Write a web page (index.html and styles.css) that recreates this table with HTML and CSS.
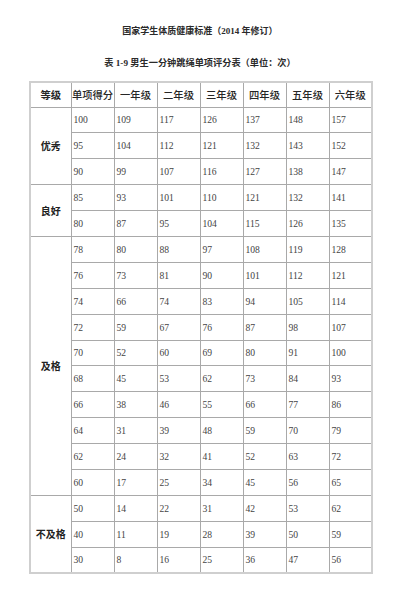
FILE: index.html
```html
<!DOCTYPE html>
<html lang="zh-CN">
<head>
<meta charset="utf-8">
<title>国家学生体质健康标准</title>
<link rel="stylesheet" href="styles.css">
</head>
<body>
<div class="page">
  <p class="title">国家学生体质健康标准（2014 年修订）</p>
  <p class="subtitle">表 1-9 男生一分钟跳绳单项评分表（单位：次）</p>
  <table class="score">
    <colgroup>
      <col class="c-grade"><col class="c"><col class="c"><col class="c"><col class="c"><col class="c"><col class="c"><col class="c">
    </colgroup>
    <thead>
      <tr><th class="g">等级</th><th>单项得分</th><th>一年级</th><th>二年级</th><th>三年级</th><th>四年级</th><th>五年级</th><th>六年级</th></tr>
    </thead>
    <tbody>
      <tr><td class="g" rowspan="3">优秀</td><td>100</td><td>109</td><td>117</td><td>126</td><td>137</td><td>148</td><td>157</td></tr>
      <tr><td>95</td><td>104</td><td>112</td><td>121</td><td>132</td><td>143</td><td>152</td></tr>
      <tr><td>90</td><td>99</td><td>107</td><td>116</td><td>127</td><td>138</td><td>147</td></tr>
      <tr><td class="g" rowspan="2">良好</td><td>85</td><td>93</td><td>101</td><td>110</td><td>121</td><td>132</td><td>141</td></tr>
      <tr><td>80</td><td>87</td><td>95</td><td>104</td><td>115</td><td>126</td><td>135</td></tr>
      <tr><td class="g" rowspan="10">及格</td><td>78</td><td>80</td><td>88</td><td>97</td><td>108</td><td>119</td><td>128</td></tr>
      <tr><td>76</td><td>73</td><td>81</td><td>90</td><td>101</td><td>112</td><td>121</td></tr>
      <tr><td>74</td><td>66</td><td>74</td><td>83</td><td>94</td><td>105</td><td>114</td></tr>
      <tr><td>72</td><td>59</td><td>67</td><td>76</td><td>87</td><td>98</td><td>107</td></tr>
      <tr><td>70</td><td>52</td><td>60</td><td>69</td><td>80</td><td>91</td><td>100</td></tr>
      <tr><td>68</td><td>45</td><td>53</td><td>62</td><td>73</td><td>84</td><td>93</td></tr>
      <tr><td>66</td><td>38</td><td>46</td><td>55</td><td>66</td><td>77</td><td>86</td></tr>
      <tr><td>64</td><td>31</td><td>39</td><td>48</td><td>59</td><td>70</td><td>79</td></tr>
      <tr><td>62</td><td>24</td><td>32</td><td>41</td><td>52</td><td>63</td><td>72</td></tr>
      <tr><td>60</td><td>17</td><td>25</td><td>34</td><td>45</td><td>56</td><td>65</td></tr>
      <tr><td class="g" rowspan="3">不及格</td><td>50</td><td>14</td><td>22</td><td>31</td><td>42</td><td>53</td><td>62</td></tr>
      <tr><td>40</td><td>11</td><td>19</td><td>28</td><td>39</td><td>50</td><td>59</td></tr>
      <tr><td>30</td><td>8</td><td>16</td><td>25</td><td>36</td><td>47</td><td>56</td></tr>
    </tbody>
  </table>
</div>
</body>
</html>
```
FILE: styles.css
```css
html, body {
  margin: 0;
  padding: 0;
  background: #ffffff;
}

.page {
  width: 400px;
  padding-top: 24px;
  font-family: "Liberation Serif", "Noto Sans CJK SC", serif;
  color: #222;
}

.title,
.subtitle {
  margin: 0;
  text-align: center;
  font-size: 9px;
  line-height: 14px;
  font-weight: 700;
  color: #2a2a2a;
}

.subtitle {
  margin-top: 18px;
  margin-bottom: 11px;
  font-size: 9.2px;
}

.score {
  margin-left: 29px;
  width: 342px;
  table-layout: fixed;
  border-collapse: collapse;
  border: 2px solid #cfcfcf;
}

.c-grade { width: 41px; }
.c { width: 43px; }

.score th,
.score td {
  border: 1px solid #a9a9a9;
  padding: 0 0 0 2px;
  text-align: left;
  vertical-align: middle;
  white-space: nowrap;
  overflow: hidden;
}

.score thead tr { height: 25px; }
.score tbody tr { height: 25.9px; }

.score th {
  padding: 0;
  text-align: center;
  font-family: "Noto Sans CJK SC", sans-serif;
  font-size: 10.3px;
  font-weight: 500;
  color: #262626;
}

.score th.g {
  font-weight: 700;
}

.score td {
  font-size: 9.6px;
  color: #444;
}

.score td.g {
  padding: 0;
  text-align: center;
  font-family: "Noto Sans CJK SC", sans-serif;
  font-size: 10px;
  font-weight: 700;
  color: #222;
}
```
